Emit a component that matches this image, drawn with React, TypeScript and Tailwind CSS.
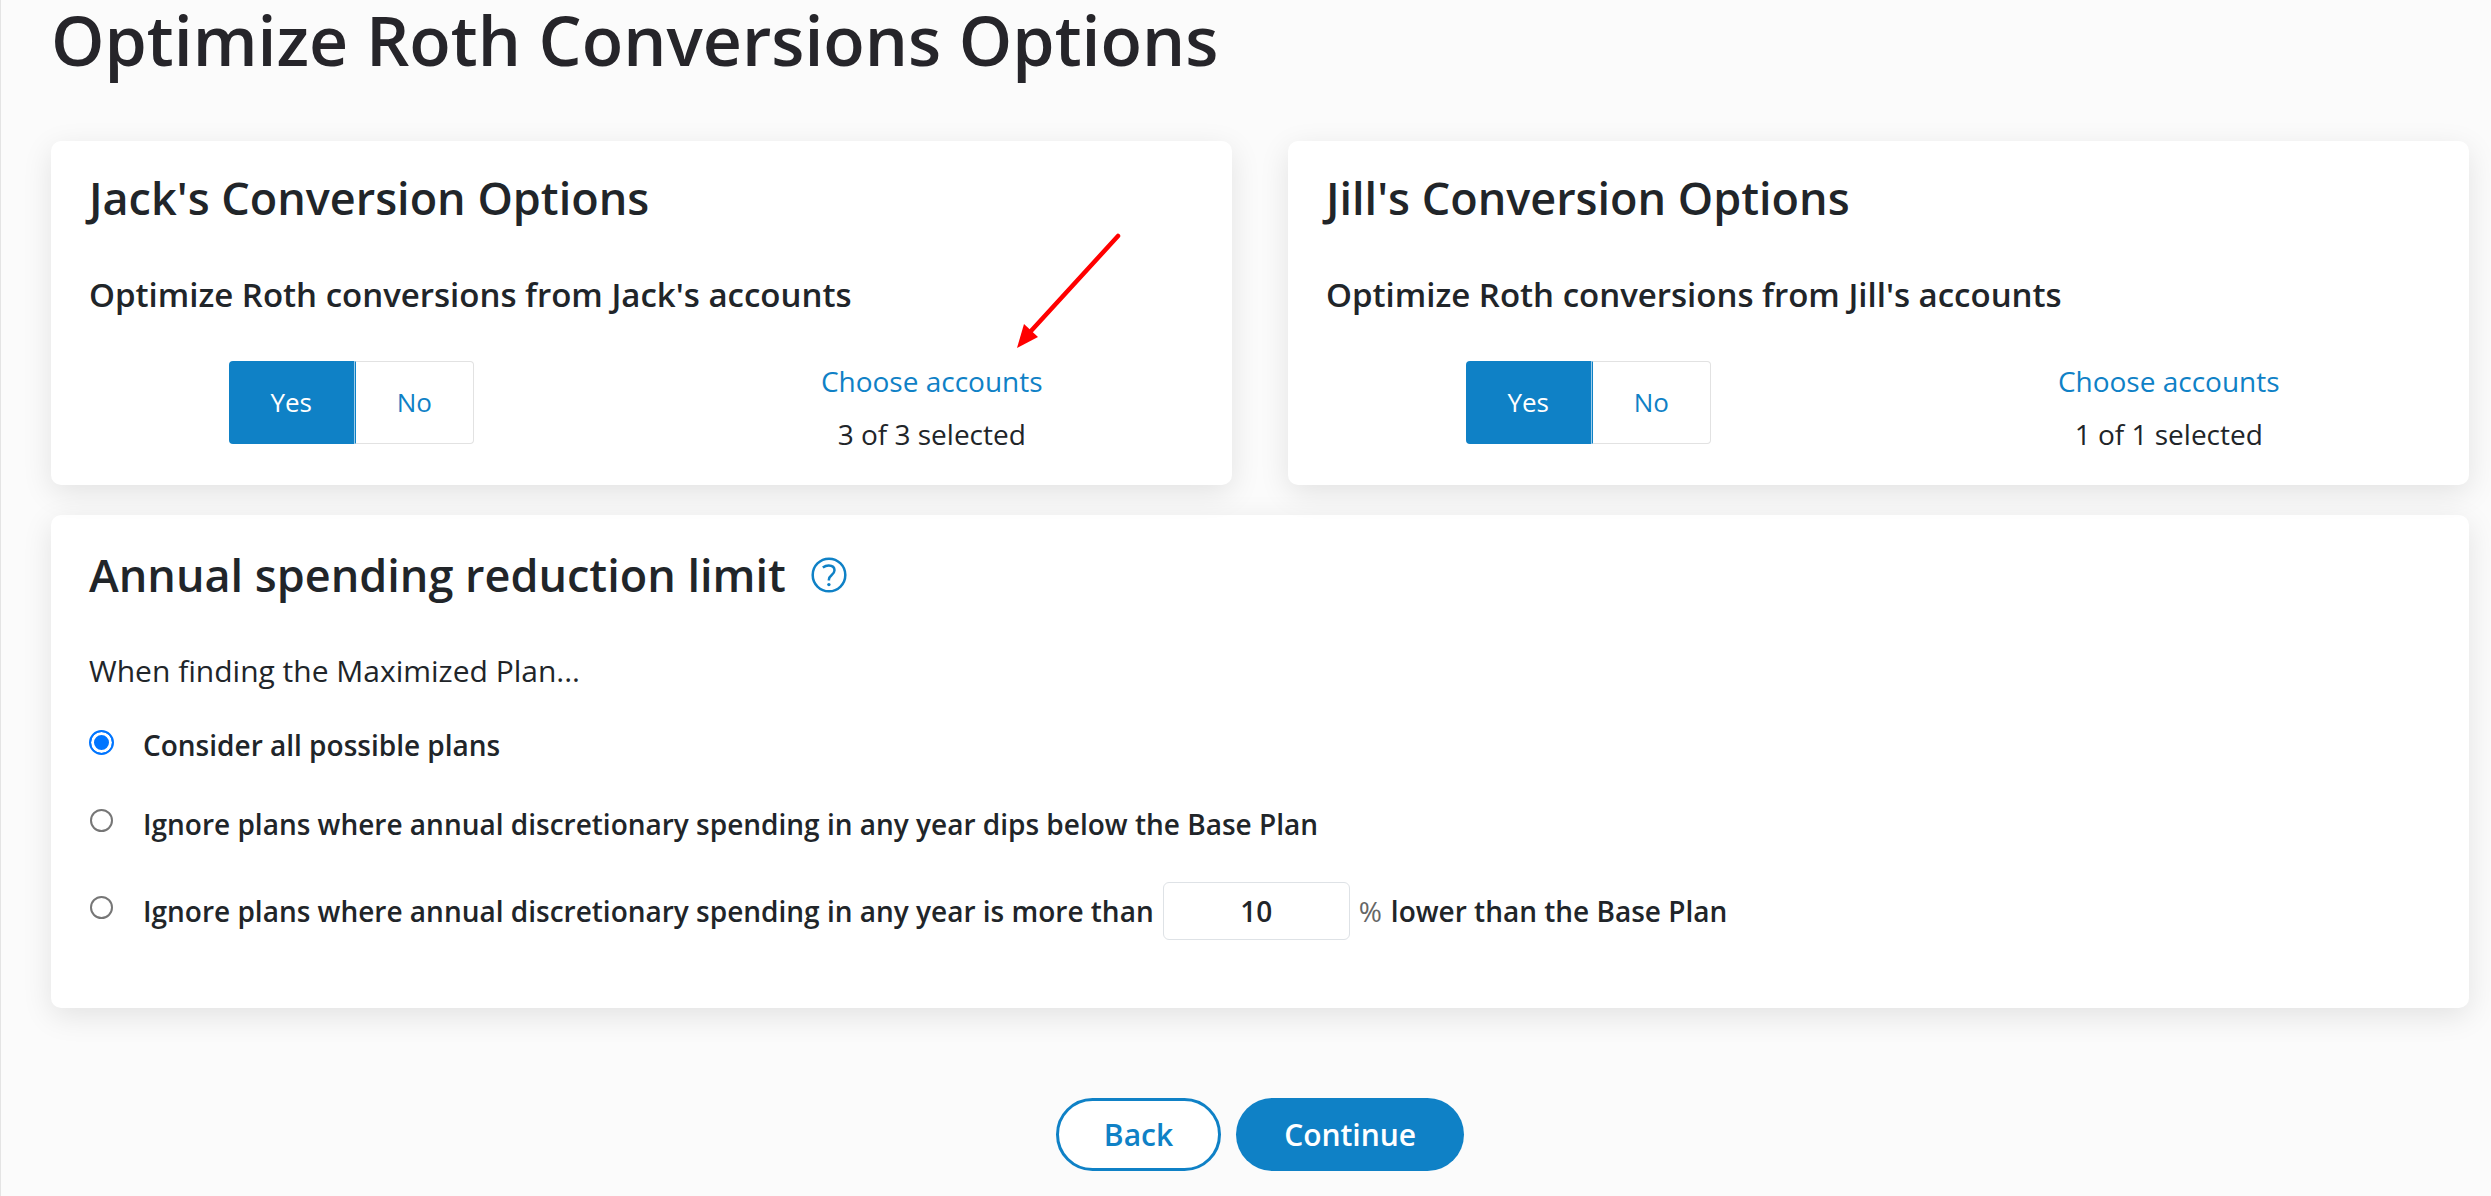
import { useState } from "react";

const people = [
  { name: "Jack", selected: 3, total: 3, annotated: true },
  { name: "Jill", selected: 1, total: 1, annotated: false },
];

const cardClass = "rounded-[10px] bg-white px-[38px] shadow-[0_8px_30px_rgba(0,0,0,0.1)]";
const radioClass =
  "mx-px size-[23px] shrink-0 appearance-none rounded-full border-2 border-[#767676] bg-white checked:mx-0 checked:size-[25px] checked:border-[#0075ff] checked:bg-[#0075ff] checked:shadow-[inset_0_0_0_3px_#fff]";

function RedArrow() {
  return (
    <svg
      className="pointer-events-none absolute -top-[122px] left-1/2 ml-[85px] h-[116px] w-[106px]"
      viewBox="0 0 106 116"
      aria-hidden="true"
    >
      <path d="M101 3 14 98" stroke="#f00" strokeWidth="4.5" strokeLinecap="round" />
      <path d="M0 115 7 91 21 104Z" fill="#f00" />
    </svg>
  );
}

function HelpIcon() {
  return (
    <svg className="size-9" viewBox="0 0 36 36" fill="none" stroke="#0f81c6" aria-hidden="true">
      <circle cx="18" cy="18" r="16.3" strokeWidth="2.5" />
      <path
        d="M11.8 10.4c1.8-1.3 3.700-2 5.900-2 3.500 0 5.800 1.900 5.800 4.900 0 2.300-1.300 3.600-3 5-1.700 1.400-2.600 2.400-2.600 4.200v1"
        strokeWidth="2.5"
      />
      <circle cx="17.900" cy="27.600" r="1.700" fill="#0f81c6" stroke="none" />
    </svg>
  );
}

function ConversionCard({ name, selected, total, annotated }: (typeof people)[number]) {
  const [optimize, setOptimize] = useState(true);
  const on = "bg-[#0f81c6] text-white";
  const off = "bg-white text-[#0f81c6]";

  return (
    <section className={`${cardClass} pt-[25px] pb-6`}>
      <h2 className="text-[45px] leading-[64px] font-semibold">{name}'s Conversion Options</h2>
      <h3 className="mt-[42px] text-[33px] leading-[46px] font-semibold">
        Optimize Roth conversions from {name}'s accounts
      </h3>
      <div className="-mx-7 mt-[37px] grid grid-cols-2">
        <div className="mt-[6px] flex h-[83px] justify-center text-[26px]">
          <button
            type="button"
            aria-pressed={optimize}
            onClick={() => setOptimize(true)}
            className={`w-[126px] rounded-l-[4px] border-r border-[#9fcde9] ${optimize ? on : off}`}
          >
            Yes
          </button>
          <button
            type="button"
            aria-pressed={!optimize}
            onClick={() => setOptimize(false)}
            className={`w-[119px] rounded-r-[4px] border border-[#e2e2e2] border-l-[#0f81c6] ${optimize ? off : on}`}
          >
            No
          </button>
        </div>
        <div className="relative text-center text-[28px] leading-[53px]">
          {annotated && <RedArrow />}
          <a href="#accounts" className="text-[#0f81c6]">
            Choose accounts
          </a>
          <p>
            {selected} of {total} selected
          </p>
        </div>
      </div>
    </section>
  );
}

export default function App() {
  const [limit, setLimit] = useState("all");
  const [percent, setPercent] = useState("10");

  return (
    <main className="min-h-screen border-l border-[#e4e4e4] bg-[#fbfbfb] pr-[22px] pb-[25px] pl-[50px] font-['Open_Sans','Noto_Sans',sans-serif] text-[#212529]">
      <h1 className="text-[68px] leading-[80px] font-semibold text-[#26252a]">
        Optimize Roth Conversions Options
      </h1>

      <div className="mt-[61px] grid grid-cols-2 gap-14">
        {people.map((person) => (
          <ConversionCard key={person.name} {...person} />
        ))}
      </div>

      <section className={`${cardClass} mt-[30px] pt-[28px] pb-[68px]`}>
        <div className="flex items-center gap-[25px]">
          <h2 className="text-[45px] leading-[64px] font-semibold">Annual spending reduction limit</h2>
          <button type="button" aria-label="About the annual spending reduction limit">
            <HelpIcon />
          </button>
        </div>
        <p className="mt-[41px] text-[30px] leading-[46px]">When finding the Maximized Plan...</p>

        <div className="mt-[30px] flex flex-col gap-[37px] text-[28px] leading-[42px] font-semibold">
          <div className="flex gap-[29px]">
            <input
              id="limit-all"
              type="radio"
              name="limit"
              checked={limit === "all"}
              onChange={() => setLimit("all")}
              className={`${radioClass} mt-[6px]`}
            />
            <label htmlFor="limit-all">Consider all possible plans</label>
          </div>
          <div className="flex gap-[29px]">
            <input
              id="limit-base"
              type="radio"
              name="limit"
              checked={limit === "base"}
              onChange={() => setLimit("base")}
              className={`${radioClass} mt-[6px]`}
            />
            <label htmlFor="limit-base">
              Ignore plans where annual discretionary spending in any year dips below the Base Plan
            </label>
          </div>
          <div className="flex gap-[29px]">
            <input
              id="limit-percent"
              type="radio"
              name="limit"
              checked={limit === "percent"}
              onChange={() => setLimit("percent")}
              className={`${radioClass} mt-[14px]`}
            />
            <div className="flex items-center gap-[9px]">
              <label htmlFor="limit-percent">
                Ignore plans where annual discretionary spending in any year is more than
              </label>
              <input
                type="text"
                aria-label="Percent lower than the Base Plan"
                value={percent}
                onChange={(e) => setPercent(e.target.value)}
                className="h-[58px] w-[187px] rounded-[6px] border border-[#dee2e6] bg-white text-center"
              />
              <span className="font-normal text-[#666]">%</span>
              <span>lower than the Base Plan</span>
            </div>
          </div>
        </div>
      </section>

      <div className="mt-[90px] flex justify-center gap-[15px] text-[30px] font-semibold">
        <button
          type="button"
          className="h-[73px] rounded-full border-[3px] border-[#0f81c6] bg-white px-[45px] text-[#0f81c6]"
        >
          Back
        </button>
        <button type="button" className="h-[73px] rounded-full bg-[#0f81c6] px-[48px] text-white">
          Continue
        </button>
      </div>
    </main>
  );
}
